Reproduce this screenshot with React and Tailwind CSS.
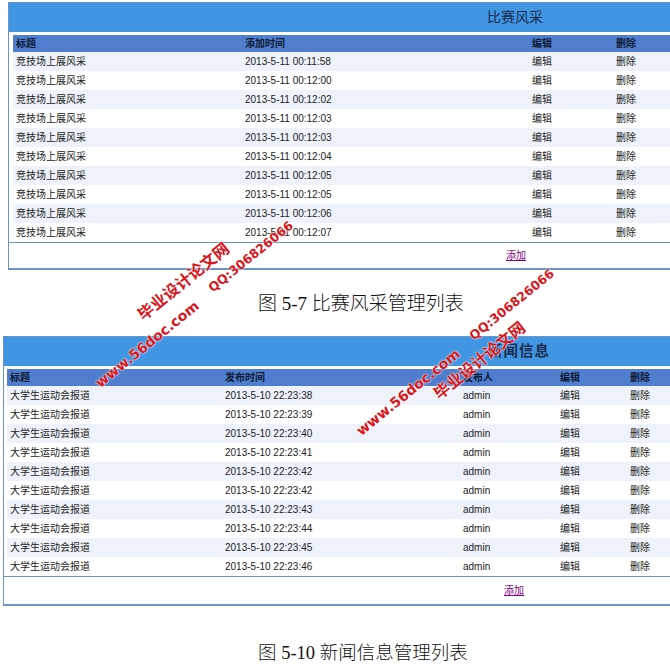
import React from 'react';

const SANS = { fontFamily: '"Liberation Sans", "Noto Sans CJK SC", sans-serif' };
const SERIF = { fontFamily: '"Liberation Serif", "Noto Sans CJK SC", serif' };

const matchRows = [
  '00:11:58', '00:12:00', '00:12:02', '00:12:03', '00:12:03',
  '00:12:04', '00:12:05', '00:12:05', '00:12:06', '00:12:07',
].map((t) => ({ title: '竞技场上展风采', time: `2013-5-11 ${t}` }));

const newsRows = [
  '22:23:38', '22:23:39', '22:23:40', '22:23:41', '22:23:42',
  '22:23:42', '22:23:43', '22:23:44', '22:23:45', '22:23:46',
].map((t) => ({ title: '大学生运动会报道', time: `2013-5-10 ${t}`, author: 'admin' }));

const Watermark = ({ x, y, size, children }) => (
  <div
    className="absolute font-bold text-[#d8161b] whitespace-nowrap leading-none [text-shadow:0_0_2px_#fff,0_0_1px_#fff]"
    style={{
      left: x,
      top: y,
      fontSize: size,
      fontFamily: '"DejaVu Sans", "Noto Sans CJK SC", sans-serif',
      transform: 'translate(-50%, -50%) rotate(-39deg)',
    }}
  >
    {children}
  </div>
);

export default function App() {
  return (
    <div className="relative w-[670px] h-[672px] overflow-hidden bg-white" style={SANS}>
      {/* 比赛风采 */}
      <div className="mt-[2px] ml-[8px] border border-r-0 border-[#6a95c4] border-b-2">
        <div className="h-[29px] bg-[#4196e4] flex items-center pl-[478px] text-[14px] text-[#1c2c4c]">
          比赛风采
        </div>
        <div className="pl-[4px] pt-[3px]">
          <div className="grid grid-cols-[229px_287px_84px_1fr] h-[17px] items-center bg-[#4f7ecf] text-[10px] font-bold text-[#0d1a33]">
            <div className="pl-[3px]">标题</div>
            <div className="pl-[3px]">添加时间</div>
            <div className="pl-[3px]">编辑</div>
            <div className="pl-[3px]">删除</div>
          </div>
          {matchRows.map((row, i) => (
            <div
              key={i}
              className={`grid grid-cols-[229px_287px_84px_1fr] h-[19px] items-center text-[10px] text-[#222] ${i % 2 === 0 ? 'bg-[#eef3fb]' : 'bg-white'}`}
            >
              <div className="pl-[3px]">{row.title}</div>
              <div className="pl-[3px]">{row.time}</div>
              <div className="pl-[3px]">编辑</div>
              <div className="pl-[3px]">删除</div>
            </div>
          ))}
        </div>
        <div className="h-[26px] border-t border-[#6a95c4] flex items-center pl-[497px]">
          <a className="text-[10px] text-[#800080] underline">添加</a>
        </div>
      </div>

      <div className="mt-[22px] h-[24px] leading-[24px] pl-[258px] text-[19px] font-light text-[#111]" style={SERIF}>
        图 5-7 比赛风采管理列表
      </div>

      {/* 新闻信息 */}
      <div className="mt-[20px] ml-[3px] border border-r-0 border-[#6a95c4] border-b-2">
        <div className="h-[29px] bg-[#4196e4] flex items-center pl-[484px] text-[14.5px] font-semibold text-[#1c2c4c] tracking-[1px]">
          新闻信息
        </div>
        <div className="pl-[3px] pt-[3px]">
          <div className="grid grid-cols-[215px_238px_97px_70px_1fr] h-[17px] items-center bg-[#4f7ecf] text-[10px] font-bold text-[#0d1a33]">
            <div className="pl-[3px]">标题</div>
            <div className="pl-[3px]">发布时间</div>
            <div className="pl-[3px]">发布人</div>
            <div className="pl-[3px]">编辑</div>
            <div className="pl-[3px]">删除</div>
          </div>
          {newsRows.map((row, i) => (
            <div
              key={i}
              className={`grid grid-cols-[215px_238px_97px_70px_1fr] h-[19px] items-center text-[10px] text-[#222] ${i % 2 === 0 ? 'bg-[#eef3fb]' : 'bg-white'}`}
            >
              <div className="pl-[3px]">{row.title}</div>
              <div className="pl-[3px]">{row.time}</div>
              <div className="pl-[3px]">{row.author}</div>
              <div className="pl-[3px]">编辑</div>
              <div className="pl-[3px]">删除</div>
            </div>
          ))}
        </div>
        <div className="h-[28px] border-t border-[#6a95c4] flex items-center pl-[500px]">
          <a className="text-[10px] text-[#800080] underline">添加</a>
        </div>
      </div>

      <div className="mt-[35px] h-[24px] leading-[24px] pl-[258px] text-[18.5px] font-light text-[#111]" style={SERIF}>
        图 5-10 新闻信息管理列表
      </div>

      {/* watermarks */}
      <div className="absolute inset-0 pointer-events-none">
        <Watermark x={147} y={344} size={14}>www.56doc.com</Watermark>
        <Watermark x={184} y={282} size={16}>毕业设计论文网</Watermark>
        <Watermark x={251} y={257} size={12.5}>QQ:306826066</Watermark>
        <Watermark x={408} y={392} size={14}>www.56doc.com</Watermark>
        <Watermark x={480} y={361} size={16}>毕业设计论文网</Watermark>
        <Watermark x={512} y={305} size={12.5}>QQ:306826066</Watermark>
      </div>
    </div>
  );
}
